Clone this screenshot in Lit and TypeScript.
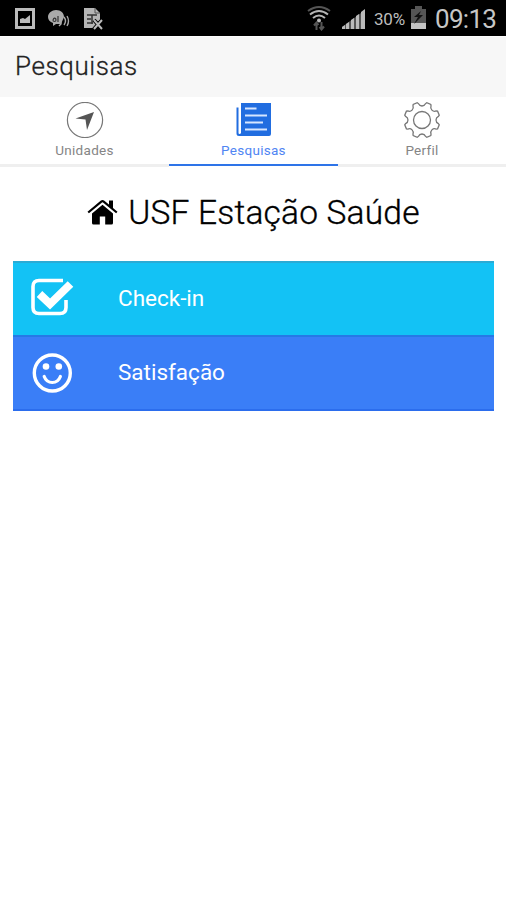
import { LitElement, html, css } from "lit";
import { customElement } from "lit/decorators.js";

// Cog outline with rounded notches between its teeth; a notch sits at the top.
const TEETH = 8;
function gearPath(): string {
  const step = 360 / TEETH;
  const pt = (deg: number, r: number) => {
    const a = (deg * Math.PI) / 180;
    return `${(18 + r * Math.cos(a)).toFixed(2)} ${(18 + r * Math.sin(a)).toFixed(2)}`;
  };
  let d = "";
  for (let i = 0; i < TEETH; i++) {
    const c = (i + 0.5) * step;
    d += `${i ? "L" : "M"}${pt(c - 10, 16.8)}L${pt(c - 7, 17.9)}L${pt(c + 7, 17.9)}L${pt(c + 10, 16.8)}`;
    d += `C${pt(c + 13, 13.4)} ${pt(c + step - 13, 13.4)} ${pt(c + step - 10, 16.8)}`;
  }
  return d + "Z";
}

@customElement("app-root")
export class AppRoot extends LitElement {
  static styles = css`
    :host { display: block; width: 100%; height: 900px; background: #fff; font-family: Roboto, sans-serif; overflow: hidden; color: #000; }
    svg { display: block; flex: none; }
    .status { height: 36px; box-sizing: border-box; background: #000; color: #bdbdbd; display: flex; align-items: center; padding: 0 9px 0 14px; }
    .notes { display: flex; gap: 11px; align-items: center; flex: 1; }
    .signal { margin-left: 10px; }
    .battery { font-size: 17px; letter-spacing: -0.2px; margin: 2px 4px 0 9px; width: 32px; white-space: nowrap; }
    .clock { font-size: 26px; margin: 2px 0 0 8px; width: 62px; letter-spacing: -0.7px; white-space: nowrap; color: #c6c6c6; }
    .bar { height: 61px; box-sizing: border-box; background: #f7f7f7; display: flex; align-items: center; padding: 0 15px 3px; border-top: 1px solid #fdfdfd; }
    .bar h1 { margin: 0; font-size: 26px; font-weight: 300; letter-spacing: 0.6px; color: #222; -webkit-text-stroke: 0.3px #222; }
    .tabs { height: 70px; display: grid; grid-template-columns: 169px 169px 1fr; }
    .tab { box-sizing: border-box; display: flex; flex-direction: column; align-items: center; padding-top: 5px; border-bottom: 3px solid #efefef; color: #858585; font-size: 13.5px; line-height: 16px; letter-spacing: 0.28px; }
    .tab.on { color: #5085f3; border-bottom: 2px solid #2e74e8; height: 69px; }
    .tab svg { margin-bottom: 4px; }
    .title { display: flex; justify-content: center; align-items: center; gap: 10px; height: 94px; box-sizing: border-box; padding: 0 0 4px 1px; }
    .title h2 { margin: 0; font-size: 33.5px; font-weight: 300; letter-spacing: 0.2px; white-space: nowrap; -webkit-text-stroke: 0.35px #000; }
    .list { margin: 0 12px 0 13px; }
    .row { box-sizing: border-box; display: flex; align-items: center; color: #fff; font-size: 22.5px; padding: 0 0 2px 17px; }
    .row svg { margin-right: 44px; }
    .check { background: #13c2f5; border-top: 2px solid #2aabd5; height: 74px; padding-bottom: 3px; }
    .check svg { margin-top: -1px; }
    .sat { background: #3a7ef7; border-top: 2px solid #2679e6; border-bottom: 2px solid #2b6ded; height: 76px; }
    .sat svg { margin-top: 1px; }
  `;

  render() {
    return html`
      <div class="status">
        <div class="notes">
          <svg width="22" height="24" viewBox="0 0 22 24"><path fill="#bbb" fill-rule="evenodd" d="M1 2h20v21H1zM4 5v15h14V5z"/><path fill="#bbb" d="M6 17v-4l3-1 2 1 5-4v8z"/></svg>
          <svg width="24" height="24" viewBox="0 0 24 24"><path fill="#aaa" d="M9 4c5 0 8 3 8 7l-3 7H9l-3 2v-3c-3-1-5-3-5-6 0-4 4-7 8-7z"/><g fill="none" stroke="#333" stroke-width="1.2"><path d="M6 14c1-3 3-2 3 0s-3 2-3 0M11 10v6"/></g><g fill="none" stroke="#aaa" stroke-width="1.4"><path d="M14 11v7l-2 2M17 11q3 4 0 8M20 10q3 5 0 10"/></g></svg>
          <svg width="22" height="24" viewBox="0 0 22 24"><path fill="#b5b5b5" d="M2 2h11l5 5v8l-4 1v6H2z"/><path d="M13 2v5h5" stroke="#555" fill="none"/><path d="M5 9h10M5 13h4M10 9v9M5 17h6" stroke="#333" stroke-width="1.5" fill="none"/><path d="M12 14l8 9M20 14l-8 9" stroke="#000" stroke-width="4"/><path d="M12 14l8 9M20 14l-8 9" stroke="#bbb" stroke-width="2"/></svg>
        </div>
        <svg width="24" height="26" viewBox="0 0 24 26"><g fill="none" stroke-width="2"><path stroke="#555" d="M1 6q11-8 22 0"/><path stroke="#b5b5b5" d="M3 9.500q9-7 18 0M6 13q6-5 12 0"/></g><circle cx="12" cy="15.500" r="2" fill="#bbb"/><path d="M9.500 25v-7M7 20.500l2.500-3 2 2.500M14.500 17v7m-2-2 2 2.500 2.500-3" stroke="#555" stroke-width="2" fill="none"/></svg>
        <svg class="signal" width="24" height="26" viewBox="0 0 24 26"><path fill="#555" d="M1 24v-2L24 5v19z"/><path fill="#bbb" d="M1 24v-2l3-2v4zM5 24v-5l3-2v7zM10 24v-9l3-2v11zM15 24V11l3-2v15zM20 24V7l4-3v20z"/></svg>
        <span class="battery">30%</span>
        <svg width="17" height="26" viewBox="0 0 17 26"><path fill="#555" d="M1 4h4V1h7v3h4v14H1z"/><path fill="#c4c4c4" d="M1 18h15v6H1z"/><path fill="#111" d="m11 6-7 6h4l-4 7 9-9H9z"/></svg>
        <span class="clock">09:13</span>
      </div>
      <header class="bar"><h1>Pesquisas</h1></header>
      <nav class="tabs">
        <div class="tab">
          <svg width="38" height="36" viewBox="0 0 38 36"><circle cx="19" cy="18" r="17.600" fill="none" stroke="#777" stroke-width="1.2"/><path fill="#555" d="M28 10 21 28l-1.500-10.500L9.500 16.500z"/></svg>
          Unidades
        </div>
        <div class="tab on">
          <svg width="36" height="36" viewBox="0 0 36 36"><path fill="#216de0" d="M5 1h30v31q0 2-2 2H3q-2.500 0-2.500-2.500V5.500h2V31q0 1 1 1t1.500-1z"/><path stroke="#d6e6ff" stroke-width="2" d="M9 6.500h11.500M9 13.500h22M9 20.500h18M9 27.500h22"/></svg>
          Pesquisas
        </div>
        <div class="tab">
          <svg width="36" height="36" viewBox="0 0 36 36" fill="none" stroke="#777" stroke-width="1.300"><path d=${gearPath()}/><circle cx="18" cy="18" r="8.500"/></svg>
          Perfil
        </div>
      </nav>
      <div class="title">
        <svg width="31" height="26" viewBox="0 0 31 26"><path d="M15.500 5.800 26 14.500V24q0 1.500-1.500 1.500h-6.300v-8h-5.400v8H6.500Q5 25.500 5 24v-9.500z"/><path d="M1.200 13.500 14.300 2.600q1.200-.9 2.400 0L29.800 13.500" fill="none" stroke="#000" stroke-width="2.200"/><path d="M22 1.500h4v9l-4-4z"/></svg>
        <h2>USF Estação Saúde</h2>
      </div>
      <div class="list">
        <div class="row check">
          <svg width="44" height="40" viewBox="0 0 44 40"><path d="M33 3.500H9q-6 0-6 6v21q0 6 6 6h21q6 0 6-6V23" fill="none" stroke="#fff" stroke-width="3.600"/><path d="M9.500 17 20 27 40.500 7" fill="none" stroke="#fff" stroke-width="8"/></svg>
          Check-in
        </div>
        <div class="row sat">
          <svg width="44" height="42" viewBox="0 0 44 42"><circle cx="22.300" cy="21" r="18" fill="none" stroke="#fff" stroke-width="3.400"/><circle cx="16" cy="14.500" r="3.300" fill="#fff"/><circle cx="28.800" cy="14.500" r="3.300" fill="#fff"/><path d="M14.200 24.500c3 8 13.200 8 16.200 0" fill="none" stroke="#fff" stroke-width="3.200" stroke-linecap="round"/></svg>
          Satisfação
        </div>
      </div>
    `;
  }
}
